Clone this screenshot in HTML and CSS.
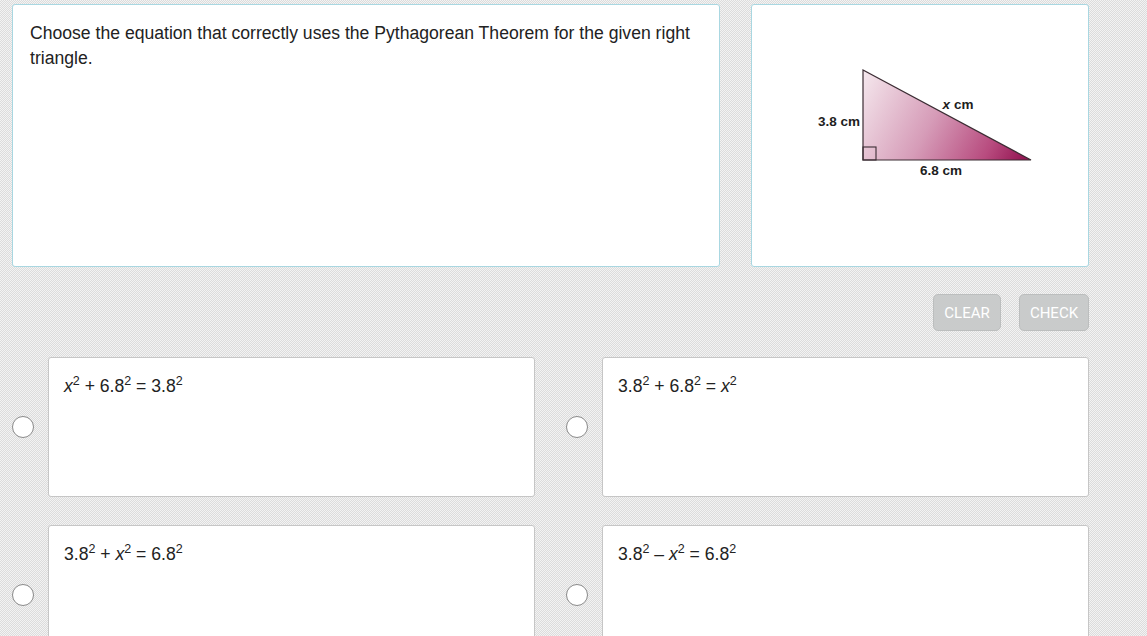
FILE: index.html
```html
<!DOCTYPE html>
<html>
<head>
<meta charset="utf-8">
<link rel="stylesheet" href="styles.css">
</head>
<body>
<div class="page">
  <div class="top">
    <div class="question">Choose the equation that correctly uses the Pythagorean Theorem for the given right triangle.</div>
    <div class="figure">
      <svg class="tri" width="336" height="261" viewBox="0 0 336 261">
        <defs>
          <linearGradient id="g" gradientUnits="userSpaceOnUse" x1="111" y1="70" x2="272" y2="155">
            <stop offset="0" stop-color="#f4e6ec"/>
            <stop offset="0.45" stop-color="#d69cb8"/>
            <stop offset="0.8" stop-color="#b84c7f"/>
            <stop offset="1" stop-color="#941553"/>
          </linearGradient>
        </defs>
        <polygon points="111,65 111,155 279,155" fill="url(#g)" stroke="#3b2c33" stroke-width="1.2" stroke-linejoin="miter"/>
        <rect x="111" y="142" width="13" height="13" fill="none" stroke="#3b2c33" stroke-width="1.1"/>
        <text class="lbl" x="108" y="121" text-anchor="end">3.8 cm</text>
        <text class="lbl" x="206" y="104" text-anchor="middle"><tspan font-style="italic">x</tspan> cm</text>
        <text class="lbl" x="189" y="170" text-anchor="middle">6.8 cm</text>
      </svg>
    </div>
  </div>
  <div class="actions">
    <button class="btn clear">CLEAR</button>
    <button class="btn check">CHECK</button>
  </div>
  <div class="answers">
    <div class="option">
      <span class="radio"></span>
      <div class="card"><i>x</i><sup>2</sup> + 6.8<sup>2</sup> = 3.8<sup>2</sup></div>
    </div>
    <div class="option">
      <span class="radio"></span>
      <div class="card">3.8<sup>2</sup> + 6.8<sup>2</sup> = <i>x</i><sup>2</sup></div>
    </div>
    <div class="option">
      <span class="radio"></span>
      <div class="card">3.8<sup>2</sup> + <i>x</i><sup>2</sup> = 6.8<sup>2</sup></div>
    </div>
    <div class="option">
      <span class="radio"></span>
      <div class="card">3.8<sup>2</sup> – <i>x</i><sup>2</sup> = 6.8<sup>2</sup></div>
    </div>
  </div>
</div>
</body>
</html>
```
FILE: styles.css
```css
html, body {
  margin: 0;
  padding: 0;
  height: 100%;
  overflow: hidden;
}
body {
  background: repeating-conic-gradient(#dcdcdc 0 25%, #f3f3f3 0 50%) 0 0 / 2px 2px;
  font-family: "Liberation Sans", Arial, sans-serif;
  color: #222;
}
.page {
  padding: 4px 58px 0 12px;
}
.top {
  display: flex;
  gap: 31px;
}
.question {
  box-sizing: border-box;
  width: 708px;
  height: 263px;
  background: #fff;
  border: 1px solid #a9d7e1;
  border-radius: 3px;
  padding: 16px 17px;
  font-size: 17.6px;
  line-height: 25px;
}
.figure {
  box-sizing: border-box;
  width: 338px;
  height: 263px;
  background: #fff;
  border: 1px solid #a9d7e1;
  border-radius: 3px;
}
.tri {
  display: block;
}
.lbl {
  font-family: "Liberation Sans", Arial, sans-serif;
  font-weight: bold;
  font-size: 13.5px;
  fill: #1e1e1e;
}
.actions {
  display: flex;
  justify-content: flex-end;
  gap: 18px;
  margin-top: 27px;
  height: 37px;
}
.btn {
  box-sizing: border-box;
  height: 37px;
  background: #c9cbcb;
  border: 1px solid #bcbebe;
  border-radius: 5px;
  color: #fff;
  font-family: Roboto, "Liberation Sans", sans-serif;
  font-size: 15px;
  font-weight: 400;
  padding: 0;
}
.clear { width: 68px; }
.check { width: 70px; }
.answers {
  margin-top: 26px;
  display: grid;
  grid-template-columns: 523px 523px;
  column-gap: 31px;
  row-gap: 28px;
}
.option {
  display: flex;
  align-items: center;
  gap: 14px;
}
.radio {
  box-sizing: border-box;
  flex: none;
  width: 22px;
  height: 22px;
  border-radius: 50%;
  background: #fff;
  border: 1.5px solid #8a8a8a;
}
.card {
  box-sizing: border-box;
  width: 487px;
  height: 140px;
  background: #fff;
  border: 1px solid #c6c6c6;
  border-radius: 3px;
  padding: 17px 15px;
  font-size: 17.6px;
  line-height: 22px;
}
.card sup {
  font-size: 12.5px;
  line-height: 0;
  vertical-align: 7px;
}
.card i {
  font-style: italic;
}
```
